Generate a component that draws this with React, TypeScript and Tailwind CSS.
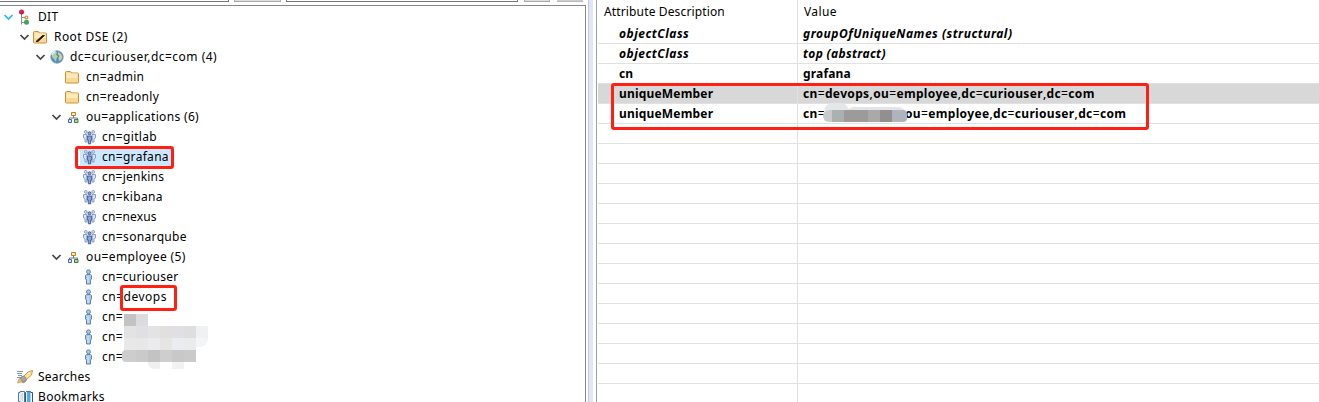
import React from "react";

type Kind = "tree" | "root" | "globe" | "folder" | "org" | "group" | "person" | "search" | "book";

function Icon({ kind }: { kind: Kind }) {
  return (
    <svg width="18" height="16" viewBox="0 0 18 16" className="shrink-0">
      {kind === "tree" && (
        <g fill="none">
          <path d="M5.500 4v11.500M5.500 8.500h4M5.500 13.500h4" stroke="#8a8f94" />
          <circle cx="5.500" cy="3" r="2.500" fill="#cf1844" />
          <path d="M9.200 7.200h2.600v2.600H9.200z" fill="#fff3c4" stroke="#b18a2c" />
          <circle cx="10.500" cy="13.200" r="2.500" fill="#3f9f66" />
          <path d="M4.500 2.200h1" stroke="#ec7690" />
        </g>
      )}
      {(kind === "root" || kind === "folder") && (
        <g>
          <path d="M1.500 13V3.500q0-1 1-1h3.500q1 0 1.500 1.500h6q1 0 1 1V13q0 1-1 1h-11q-1 0-1-1z" fill="#fbd78f" stroke="#c9923f" />
          <path d="M2.500 6h11v3h-11z" fill="#fdebba" />
          <path d="M2.500 5h11" stroke="#fff5d8" />
          {kind === "root" && <path d="M4 12.500h2l6.500-6h-2z" fill="#111" stroke="#111" strokeWidth=".8" />}
        </g>
      )}
      {kind === "globe" && (
        <g>
          <circle cx="9" cy="8" r="6.200" fill="#4c8fca" stroke="#7c91a8" strokeWidth=".8" />
          <path d="M4 4l3-2 2 1.500-1 2 2 2-1.500 2L8 13l-2-3-2-2z" fill="#b7cf9c" />
          <path d="M10 3l3 2 1.500 3-1.500 3-2 1-.5-3 1-2-1.500-2z" fill="#d9cd91" />
          <path d="M3.800 6q1-2.700 3.500-3.500" stroke="#e6f3fc" strokeWidth="1.500" fill="none" />
        </g>
      )}
      {kind === "org" && (
        <g>
          <path d="M9.500 6.500v2.500M5.500 11V9h8v2" fill="none" stroke="#67788a" />
          <path d="M7.500 3.500h4v3h-4z" fill="#ffefb5" stroke="#b18225" />
          <path d="M4.500 10.500h3v3h-3z" fill="#dce9fb" stroke="#446ba4" />
          <path d="M10.500 10.500h3.500v3h-3.500z" fill="#b5dd99" stroke="#3b8038" />
        </g>
      )}
      {kind === "group" && (
        <g fill="#d7e3f3" stroke="#8197bd" strokeWidth=".9">
          <circle cx="5.800" cy="2.900" r="1.400" />
          <path d="M3.500 5.500h3.500v7.500H5V10l-1.500-1z" />
          <circle cx="13.200" cy="2.900" r="1.400" />
          <path d="M15.500 5.500H12v7.500h2V10l1.500-1z" />
          <circle cx="9.500" cy="4.300" r="1.500" fill="#8ca7d3" stroke="#38578f" />
          <path d="M7.300 7h4.400v4h-1v3.800H8.300V11h-1z" fill="#8ca7d3" stroke="#38578f" />
        </g>
      )}
      {kind === "person" && (
        <g fill="#a9c6e5" stroke="#557eae" strokeWidth=".9">
          <circle cx="8.500" cy="2.800" r="2" />
          <path d="M6.500 5.500h4l1 1V10l-1 1v4h-4v-4l-1-1V6.500z" />
          <path d="M8 7v7" stroke="#e3effa" />
        </g>
      )}
      {kind === "search" && (
        <g>
          <path d="M1 2.500h6M1 4.500h5M2 6.500h4M1 8.500h4" stroke="#7895bd" />
          <path d="M7 8l5-5 4.500-1.500L15.500 6l-5.500 5z" fill="#ffe09a" stroke="#cd963e" />
          <path d="M6.500 8L3 10l-1.500 4L5 13l3 1 2-2.500z" fill="#f4be7e" stroke="#c88c52" strokeWidth=".7" />
          <ellipse cx="7.500" cy="10" rx="2.500" ry="3" fill="#aaa8a5" stroke="#7c7774" strokeWidth=".7" transform="rotate(-35 7.500 10)" />
          <circle cx="13" cy="4.500" r="1" fill="#fff8da" />
        </g>
      )}
      {kind === "book" && (
        <g>
          <path d="M2.500 3.500H4v-1h4.500v11H4v-1H2.500z" fill="#f0f6fd" stroke="#587797" />
          <path d="M9.500 3.500l1-1h4v1h2v10h-7z" fill="#fff" stroke="#315779" />
          <path d="M11 2.500h3.500v10.800H11z" fill="#4baaf0" />
          <path d="M5 4v8M6.500 4v8" stroke="#c5d7ea" />
          <path d="M2.500 14h14" stroke="#315779" />
        </g>
      )}
    </svg>
  );
}

function Chevron({ blue = false }: { blue?: boolean }) {
  return (
    <svg width="16" height="16" viewBox="0 0 16 16" className="shrink-0">
      <path d="M4.500 6l4 4 4-4" fill="none" stroke={blue ? "#27b9ef" : "#444"} strokeWidth="1.700" />
    </svg>
  );
}

type Row = { kind: Kind; text: string; pad: string; track: string; open?: boolean; selected?: boolean };

const tree: Row[] = [
  { kind: "tree", text: "DIT", pad: "pl-0", track: "tracking-[0.3px]", open: true },
  { kind: "root", text: "Root DSE (2)", pad: "pl-4", track: "tracking-[0.42px]", open: true },
  { kind: "globe", text: "dc=curiouser,dc=com (4)", pad: "pl-8", track: "tracking-[0.48px]", open: true },
  { kind: "folder", text: "cn=admin", pad: "pl-12", track: "tracking-[0.3px]" },
  { kind: "folder", text: "cn=readonly", pad: "pl-12", track: "tracking-[0.34px]" },
  { kind: "org", text: "ou=applications (6)", pad: "pl-12", track: "tracking-[0.33px]", open: true },
  { kind: "group", text: "cn=gitlab", pad: "pl-16", track: "tracking-[0.33px]" },
  { kind: "group", text: "cn=grafana", pad: "pl-16", track: "tracking-[0.3px]", selected: true },
  { kind: "group", text: "cn=jenkins", pad: "pl-16", track: "tracking-[0.22px]" },
  { kind: "group", text: "cn=kibana", pad: "pl-16", track: "tracking-[0.33px]" },
  { kind: "group", text: "cn=nexus", pad: "pl-16", track: "tracking-[0.16px]" },
  { kind: "group", text: "cn=sonarqube", pad: "pl-16", track: "tracking-[0.34px]" },
  { kind: "org", text: "ou=employee (5)", pad: "pl-12", track: "tracking-[0.4px]", open: true },
  { kind: "person", text: "cn=curiouser", pad: "pl-16", track: "tracking-[0.25px]" },
  { kind: "person", text: "cn=devops", pad: "pl-16", track: "tracking-[0.5px]" },
  { kind: "person", text: "cn=", pad: "pl-16", track: "tracking-[0.3px]" },
  { kind: "person", text: "cn=", pad: "pl-16", track: "tracking-[0.3px]" },
  { kind: "person", text: "cn=", pad: "pl-16", track: "tracking-[0.3px]" },
  { kind: "search", text: "Searches", pad: "pl-0", track: "tracking-[0.25px]" },
  { kind: "book", text: "Bookmarks", pad: "pl-0", track: "tracking-[0.34px]" },
];

type Attribute = { name: string; value: string; nameTrack: string; valueTrack: string };

const attributes: Attribute[] = [
  { name: "objectClass", value: "groupOfUniqueNames (structural)", nameTrack: "tracking-[0.52px]", valueTrack: "tracking-[0.5px]" },
  { name: "objectClass", value: "top (abstract)", nameTrack: "tracking-[0.52px]", valueTrack: "tracking-[0.35px]" },
  { name: "cn", value: "grafana", nameTrack: "tracking-[0.1px]", valueTrack: "tracking-[0.16px]" },
  { name: "uniqueMember", value: "cn=devops,ou=employee,dc=curiouser,dc=com", nameTrack: "tracking-[0.18px]", valueTrack: "tracking-[0.35px]" },
  { name: "uniqueMember", value: "", nameTrack: "tracking-[0.18px]", valueTrack: "tracking-[0.34px]" },
  ...Array.from({ length: 14 }, () => ({ name: "", value: "", nameTrack: "", valueTrack: "" })),
];

function Value({ text }: { text: string }) {
  return (
    <span className="whitespace-pre">
      {text.split(/([=,])/).map((part, i) =>
        part === "=" || part === "," ? <span key={i} className="font-medium">{part}</span> : part
      )}
    </span>
  );
}

const treeTiles = [
  "left-[124px] top-[314px] w-[12px] h-[12px] bg-[#c4c2c2]",
  "left-[136px] top-[314px] w-[12px] h-[12px] bg-[#dbdcde]",
  "left-[124px] top-[326px] w-[12px] h-[12px] bg-[#e4e3e3]",
  "left-[136px] top-[326px] w-[12px] h-[12px] bg-[#dfdfe4]",
  "left-[148px] top-[326px] w-[12px] h-[12px] bg-[#e3e3e4]",
  "left-[160px] top-[326px] w-[12px] h-[12px] bg-[#e2e0df]",
  "left-[172px] top-[326px] w-[12px] h-[12px] bg-[#e0e0e4]",
  "left-[184px] top-[326px] w-[12px] h-[12px] bg-[#dfdedf]",
  "left-[196px] top-[326px] w-[12px] h-[12px] bg-[#eff1f3]",
  "left-[124px] top-[338px] w-[12px] h-[12px] bg-[#e9e8e8]",
  "left-[136px] top-[338px] w-[12px] h-[12px] bg-[#e7e7e8]",
  "left-[148px] top-[338px] w-[12px] h-[12px] bg-[#ebebed]",
  "left-[160px] top-[338px] w-[12px] h-[12px] bg-[#e7e5e4]",
  "left-[172px] top-[338px] w-[12px] h-[12px] bg-[#e9edf1]",
  "left-[184px] top-[338px] w-[12px] h-[12px] bg-[#eaebed]",
  "left-[196px] top-[338px] w-[12px] h-[9px] bg-[#f4f5f6] rounded-br-lg",
  "left-[122px] top-[350px] w-[14px] h-[12px] bg-[#cecdcd] rounded-l-sm",
  "left-[136px] top-[350px] w-[12px] h-[12px] bg-[#cacaca]",
  "left-[148px] top-[350px] w-[12px] h-[12px] bg-[#c3c3c3]",
  "left-[160px] top-[350px] w-[12px] h-[12px] bg-[#cecece]",
  "left-[172px] top-[350px] w-[12px] h-[12px] bg-[#c8c8c8]",
  "left-[184px] top-[350px] w-[12px] h-[12px] bg-[#cbcacb]",
  "left-[148px] top-[362px] w-[12px] h-[7px] bg-[#f0f0f0] rounded-bl-md",
  "left-[172px] top-[362px] w-[12px] h-[7px] bg-[#f2f2f2]",
];

const valueTiles = [
  "left-[824px] top-[103px] w-[25px] h-[17px] bg-[#e5e6e8] rounded-full",
  "left-[846px] top-[107px] w-[60px] h-[8px] bg-[#e3e4e7] rounded-t-lg",
  "left-[823px] top-[110px] w-[9px] h-[12px] bg-[#c9caca] rounded-l-md",
  "left-[832px] top-[110px] w-[12px] h-[12px] bg-[#abb0b1]",
  "left-[844px] top-[110px] w-[24px] h-[12px] bg-[#9c9a9a]",
  "left-[868px] top-[110px] w-[12px] h-[12px] bg-[#aaa9aa]",
  "left-[880px] top-[110px] w-[12px] h-[12px] bg-[#928f90]",
  "left-[892px] top-[110px] w-[15px] h-[12px] bg-[#b0b3bc] rounded-r-sm",
];

export default function App() {
  return (
    <div className="relative flex h-[402px] w-[1319px] overflow-hidden bg-white font-['Noto_Sans','Noto_Sans_CJK_SC',sans-serif] text-[12px] text-black">
      <section className="h-full w-[586px] shrink-0">
        <div className="flex h-[5px] items-start">
          <div className="h-[2px] w-[229px] border-r border-b border-[#777]" />
          <div className="ml-[5px] h-[2px] w-[47px] border-x border-b border-[#aaa] bg-[#ddd]" />
          <div className="ml-[5px] h-[2px] w-[232px] border-x border-b border-[#777]" />
          <div className="ml-[6px] h-[2px] w-[26px] border-x border-b border-[#aaa] bg-[#ddd]" />
          <div className="ml-[7px] h-[2px] w-[26px] border-b border-[#bbb] bg-[#ccc]" />
        </div>
        <div className="h-[397px] border-t border-r border-[#828790] pt-px">
          {tree.map((row, i) => (
            <div key={i} className={`flex h-5 items-center ${row.pad}`}>
              {row.open ? <Chevron blue={i === 0} /> : <span className="w-4 shrink-0" />}
              <div className={row.selected ? "flex h-5 items-center bg-[#cce8ff] pr-[3px]" : "flex h-5 items-center"}>
                <Icon kind={row.kind} />
                <span className={`ml-1 whitespace-pre leading-5 ${row.track}`}>{row.text}</span>
              </div>
            </div>
          ))}
        </div>
      </section>
      <div className="ml-[2px] h-full w-[5px] shrink-0 border-l border-[#c8c8c8] bg-[#e0e6f8]" />
      <section className="ml-[3px] h-full min-w-0 flex-1 border-l border-[#a0a0a7] pl-px">
        <div className="flex h-6 leading-6">
          <div className="w-[200px] border-r border-[#e1e1e1] pl-[6px] tracking-[0.14px]">Attribute Description</div>
          <div className="pl-[6px] tracking-[0.4px]">Value</div>
        </div>
        {attributes.map((row, i) => (
          <div key={i} className={`flex h-5 border-b border-[#e1e1e1] font-bold leading-[19px] ${i < 2 ? "italic" : ""} ${i === 3 ? "bg-[#d8d8d8]" : ""}`}>
            <div className={`w-[200px] shrink-0 border-r border-[#e1e1e1] pl-[21px] ${row.nameTrack}`}>{row.name}</div>
            <div className={`flex pl-[5px] ${row.valueTrack}`}>
              {i === 4 ? (
                <>
                  <span className="w-[102px]"><Value text="cn=" /></span>
                  <Value text="ou=employee,dc=curiouser,dc=com" />
                </>
              ) : (
                <Value text={row.value} />
              )}
            </div>
          </div>
        ))}
      </section>
      {treeTiles.map((tile) => <div key={tile} className={`absolute ${tile}`} />)}
      {valueTiles.map((tile) => <div key={tile} className={`absolute ${tile}`} />)}
      <div className="absolute left-[75px] top-[146px] h-[23px] w-[99px] rounded-[3px] border-3 border-[#ff1f13]" />
      <div className="absolute left-[120px] top-[285px] h-[26px] w-[57px] rounded-[3px] border-3 border-[#ff1f13]" />
      <div className="absolute left-[611px] top-[83px] h-[47px] w-[538px] rounded-[3px] border-3 border-[#ff1f13]" />
    </div>
  );
}
